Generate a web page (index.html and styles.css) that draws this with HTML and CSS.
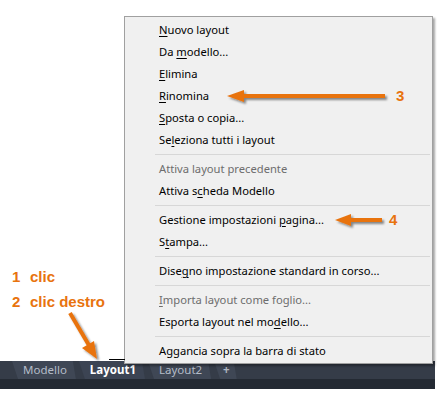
FILE: index.html
```html
<!DOCTYPE html>
<html lang="it">
<head>
<meta charset="utf-8">
<title>Layout menu</title>
<link rel="stylesheet" href="styles.css">
</head>
<body>
<div class="page">
  <div class="canvas">
    <div class="label l1"><span class="num">1</span>clic</div>
    <div class="label l2"><span class="num">2</span>clic destro</div>
    <div class="cursor-line"></div>

    <div class="menu">
      <div class="item"><u>N</u>uovo layout</div>
      <div class="item">Da <u>m</u>odello...</div>
      <div class="item"><u>E</u>limina</div>
      <div class="item"><u>R</u>inomina</div>
      <div class="item"><u>S</u>posta o copia...</div>
      <div class="item">Se<u>l</u>eziona tutti i layout</div>
      <div class="sep"></div>
      <div class="item disabled">Attiva layout precedente</div>
      <div class="item">Attiva s<u>c</u>heda Modello</div>
      <div class="sep"></div>
      <div class="item">Gestione impostazioni <u>p</u>agina...</div>
      <div class="item">S<u>t</u>ampa...</div>
      <div class="sep"></div>
      <div class="item">Dise<u>g</u>no impostazione standard in corso...</div>
      <div class="sep"></div>
      <div class="item disabled"><u>I</u>mporta layout come foglio...</div>
      <div class="item">Esporta layout nel mo<u>d</u>ello...</div>
      <div class="sep"></div>
      <div class="item">Aggancia sopra la barra di stato</div>
    </div>

    <svg class="arrows" width="445" height="399" viewBox="0 0 445 399">
      <defs>
        <filter id="sh" x="-20%" y="-50%" width="140%" height="200%">
          <feGaussianBlur in="SourceAlpha" stdDeviation="1.2"/>
          <feOffset dx="2" dy="2" result="b"/>
          <feFlood flood-color="#000" flood-opacity="0.45"/>
          <feComposite in2="b" operator="in"/>
          <feMerge><feMergeNode/><feMergeNode in="SourceGraphic"/></feMerge>
        </filter>
      </defs>
      <g filter="url(#sh)" fill="#e8730e" stroke="none">
        <rect x="240" y="94" width="145" height="4"/>
        <polygon points="227,96 244,90 244,102"/>
        <rect x="348" y="218" width="34" height="4"/>
        <polygon points="335,220 351,214 351,226"/>
        <line x1="70" y1="313" x2="90" y2="347" stroke="#e8730e" stroke-width="4"/>
        <polygon points="97,359 82,348 94,341"/>
      </g>
    </svg>
    <div class="callout c3">3</div>
    <div class="callout c4">4</div>
  </div>

  <div class="tabbar">
    <div class="tabs">
      <div class="tab">Modello</div>
      <div class="tab active">Layout1</div>
      <div class="tab">Layout2</div>
      <div class="tab plus">+</div>
    </div>
    <div class="strip"></div>
  </div>
</div>
</body>
</html>
```

FILE: styles.css
```css
html, body {
  margin: 0;
  padding: 0;
  background: #ffffff;
}
.page {
  width: 445px;
  height: 399px;
  position: relative;
  overflow: hidden;
}
.canvas {
  height: 361px;
}
.label {
  position: absolute;
  left: 12px;
  font-family: "Liberation Sans", Arial, sans-serif;
  font-weight: bold;
  font-size: 15px;
  color: #e8730e;
  line-height: 16px;
}
.label .num {
  display: inline-block;
  width: 18px;
}
.l1 { top: 269px; }
.l2 { top: 294px; }
.callout {
  position: absolute;
  z-index: 5;
  font-family: "Liberation Sans", Arial, sans-serif;
  font-weight: bold;
  font-size: 15px;
  color: #e8730e;
  line-height: 16px;
}
.c3 { left: 396px; top: 88px; }
.c4 { left: 389px; top: 212px; }
.cursor-line {
  position: absolute;
  left: 109px;
  top: 359px;
  width: 16px;
  height: 1px;
  background: #000;
  z-index: 3;
}
.arrows {
  position: absolute;
  left: 0;
  top: 0;
  z-index: 4;
  pointer-events: none;
}
.menu {
  position: absolute;
  left: 124px;
  top: 16px;
  width: 307px;
  padding: 2px 0 1px 0;
  background: #f0f0f0;
  border: 1px solid #a0a0a0;
  box-shadow: 2px 2px 2px rgba(0, 0, 0, 0.35);
  font-family: "Noto Sans", "Open Sans", sans-serif;
  font-size: 11.2px;
  color: #000;
  z-index: 2;
}
.item {
  height: 22px;
  line-height: 22px;
  padding-left: 34px;
  white-space: nowrap;
}
.item u {
  text-decoration-thickness: 1px;
  text-underline-offset: 2px;
}
.disabled {
  color: #6d6d6d;
}
.sep {
  height: 7px;
  margin-left: 30px;
  margin-right: 2px;
  position: relative;
}
.sep::after {
  content: "";
  position: absolute;
  left: 0;
  right: 0;
  top: 3px;
  height: 1px;
  background: #d7d7d7;
}
.tabbar {
  width: 435px;
  height: 28px;
  background: #353c48;
  display: flex;
  flex-direction: column;
}
.tabs {
  height: 18px;
  display: flex;
  padding-left: 12px;
  gap: 3px;
  font-family: "Noto Sans", "Open Sans", sans-serif;
  font-size: 11.5px;
}
.tab {
  height: 18px;
  line-height: 18px;
  padding: 0 9px 0 11px;
  background: #3f4755;
  color: #b4bcc8;
  clip-path: polygon(0 0, calc(100% - 3px) 0, 100% 100%, 6px 100%);
}
.tab.active {
  color: #ffffff;
  font-weight: bold;
  background: #3c4453;
}
.tab.plus {
  padding: 0 7px 0 9px;
  font-weight: bold;
  color: #aeb5c0;
}
.strip {
  flex: 1;
  background: #242a33;
}
```
